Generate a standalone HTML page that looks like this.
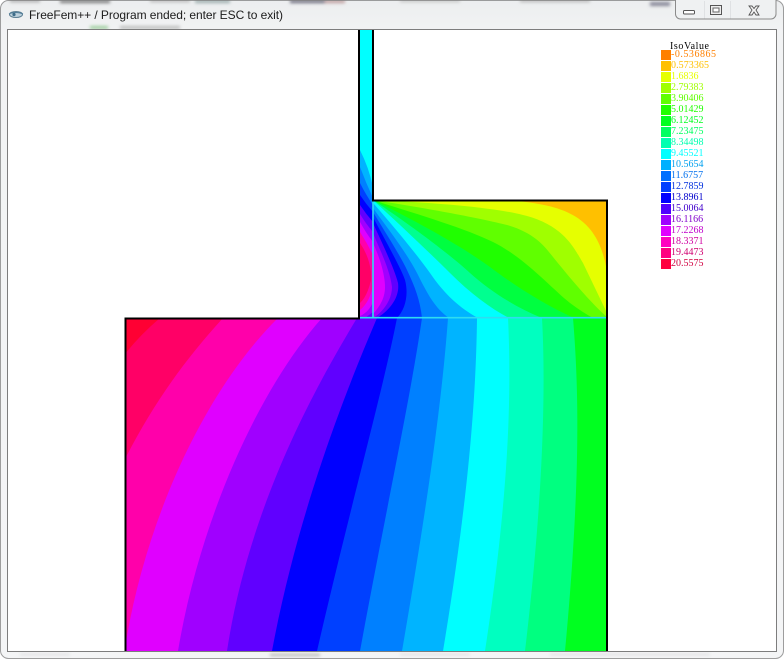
<!DOCTYPE html>
<html><head><meta charset="utf-8"><title>FreeFem++</title>
<style>html,body{margin:0;padding:0;background:#f2f3f4;width:784px;height:659px;overflow:hidden}svg{display:block}</style>
</head><body>
<svg xmlns="http://www.w3.org/2000/svg" width="784" height="659" viewBox="0 0 784 659">
<defs>
<filter id="b" x="-30%" y="-200%" width="160%" height="500%"><feGaussianBlur stdDeviation="1.6"/></filter>
<linearGradient id="t" x1="0" y1="0" x2="0" y2="1"><stop offset="0" stop-color="#eceeef"/><stop offset=".05" stop-color="#f2f3f4"/><stop offset="1" stop-color="#f4f5f6"/></linearGradient>
</defs>
<rect width="784" height="659" fill="#ffffff"/>
<rect x="0" y="0" width="784" height="659" rx="8" fill="url(#t)"/>
<g filter="url(#b)">
<rect x="10" y="0" width="30" height="2" fill="#999"/><rect x="60" y="0" width="50" height="3" fill="#777"/>
<rect x="150" y="0" width="40" height="2" fill="#aaa"/><rect x="195" y="0" width="35" height="3" fill="#9aa"/>
<rect x="290" y="0" width="50" height="3" fill="#667"/><rect x="325" y="0" width="20" height="3" fill="#b99"/>
<rect x="400" y="0" width="60" height="2" fill="#bbb"/><rect x="520" y="0" width="70" height="2" fill="#aaa"/>
<rect x="650" y="2" width="20" height="4" fill="#889"/>
<rect x="90" y="26" width="18" height="3" fill="#9c9"/><rect x="120" y="26" width="60" height="3" fill="#bbb"/>
<rect x="20" y="654" width="50" height="1" fill="#ccc"/><rect x="270" y="654" width="50" height="2" fill="#aaa"/>
<rect x="400" y="654" width="70" height="1" fill="#ccc"/><rect x="550" y="654" width="160" height="1" fill="#ccc"/>
</g>
<rect x="0.5" y="0.5" width="783" height="658" rx="8" fill="none" stroke="#777" stroke-opacity=".7"/>

<!-- window buttons -->
<path d="M675.5 0V14a5 5 0 0 0 5 5H771a5 5 0 0 0 5-5V0" fill="#eff1f2" stroke="#8b8b8b"/>
<path d="M704.5 1V18.5M730.5 1V18.5" stroke="#dfe1e3"/>
<rect x="683.5" y="10.5" width="11" height="3.5" rx="1" fill="#fff" stroke="#555"/>
<rect x="710.5" y="5.5" width="11" height="9" fill="#eee" stroke="#555"/>
<rect x="713" y="8" width="6" height="4" fill="#fff" stroke="#666"/>
<path d="M749 6H752L754 8.5L756 6H759L756 10L759 15H756L754 12L752 15H749L752 10Z" fill="#f4f4f4" stroke="#555" stroke-width=".9"/>

<!-- title -->
<ellipse cx="16" cy="14.5" rx="6.5" ry="3" fill="#bcd0dc" stroke="#5d7f93"/>
<path d="M9 14C12 12 19 12 23 14" stroke="#4f7c98" fill="none"/>
<circle cx="14" cy="14.5" r="1.6" fill="#3e6c88"/>
<text x="29" y="19" font-family="'Liberation Sans',sans-serif" font-size="12" fill="#1c1c1c" textLength="254" lengthAdjust="spacing">FreeFem++ / Program ended; enter ESC to exit)</text>

<!-- client area -->
<rect x="7.5" y="29.5" width="769" height="622" fill="#fff" stroke="#7d7d7d"/>

<!-- lower rectangle -->
<rect x="125" y="318" width="482" height="333" fill="#00ff20"/>
<g>
<path fill="#00ff80" d="M573 318C578 380 582 470 565 651H125V318Z"/>
<path fill="#00ffc0" d="M542 318C546 390 543 500 525 651H125V318Z"/>
<path fill="#00ffff" d="M508 318C512 400 508 500 485 651H125V318Z"/>
<path fill="#00b4ff" d="M477 318C476 400 468 500 443 651H125V318Z"/>
<path fill="#0080ff" d="M448 318C442 400 428 500 402 651H125V318Z"/>
<path fill="#0040ff" d="M422 318C410 400 388 500 360 651H125V318Z"/>
<path fill="#0000ff" d="M397 318C383 390 352 500 317 651H125V318Z"/>
<path fill="#6000ff" d="M377 318C355 370 300 500 272 651H125V318Z"/>
<path fill="#a000ff" d="M357 318C320 380 250 500 227 651H125V318Z"/>
<path fill="#e000ff" d="M322 318C258 390 200 520 178 651H125V318Z"/>
<path fill="#ff00aa" d="M278 318C205 390 145 520 125 648V318Z"/>
<path fill="#ff0066" d="M223 318C180 365 150 410 125 459V318Z"/>
<path fill="#ff0033" d="M160 318Q140 335 125 354V318Z"/>
</g>

<!-- upper-right rectangle -->
<rect x="373" y="200" width="234" height="118" fill="#ffc000"/>
<g>
<path fill="#e6ff00" d="M373 200H507C565 205 598 215 607 272V318H373Z"/>
<path fill="#a0ff00" d="M373 200C450 203 500 209 523 215C565 225 575 250 583 263Q595 288 607 313V318H373Z"/>
<path fill="#60ff00" d="M373 200C420 207 480 218 507 225C535 233 545 247 553 257C570 278 590 302 607 317V318H373Z"/>
<path fill="#20ff00" d="M373 200C410 212 465 228 493 242C525 258 550 287 570 303Q582 312 593 318H373Z"/>
<path fill="#00ff40" d="M373 200C410 218 460 245 490 267C515 286 545 305 574 318H373Z"/>
<path fill="#00ff90" d="M373 200C400 218 445 250 470 273C490 291 515 307 542 318H373Z"/>
<path fill="#00ffff" d="M373 200C395 220 430 253 450 273C470 293 490 308 509 318H373Z"/>
<path fill="#00b4ff" d="M373 203C390 222 415 252 430 273C445 295 460 308 478 318H373Z"/>
<path fill="#0080ff" d="M373 208C385 225 405 250 417 273C428 295 435 308 449 318H373Z"/>
<path fill="#0040ff" d="M373 212C385 232 400 255 407 270C415 287 420 300 422 318H373Z"/>
<path fill="#0000ff" d="M373 217C385 240 402 270 405 280C409 295 405 310 397 318H373Z"/>
<path fill="#6000ff" d="M373 223C382 243 395 270 398 283C400 297 390 310 377 318H373Z"/>
<path fill="#a000ff" d="M373 233C380 250 390 270 392 287C392 300 383 312 373 318Z"/>
<path fill="#e000ff" d="M373 243C380 258 385 275 385 287C385 298 380 306 373 314Z"/>
</g>

<!-- side column -->
<rect x="359" y="30" width="14" height="288" fill="#00ffff"/>
<g>
<path fill="#00b4ff" d="M360 150Q369 168 373 187V318H360Z"/>
<path fill="#0080ff" d="M360 167Q366 183 373 198V318H360Z"/>
<path fill="#0040ff" d="M360 183Q366 195 373 205V318H360Z"/>
<path fill="#0000ff" d="M360 195Q366 204 373 212V318H360Z"/>
<path fill="#6000ff" d="M360 205Q366 214 373 222V318H360Z"/>
<path fill="#a000ff" d="M360 214Q366 224 373 232V318H360Z"/>
<path fill="#e000ff" d="M360 222Q366 233 373 242V318H360Z"/>
<path fill="#ff00aa" d="M360 232Q367 243 373 255V318H360Z"/>
<path fill="#ff0066" d="M360 243Q369 256 371 272V318H360Z"/>
<path fill="#ff00aa" d="M360 303Q369 295 373 270V318H360Z"/>
<path fill="#e000ff" d="M360 310Q370 302 373 285V318H360Z"/>
<path fill="#a000ff" d="M360 316Q369 312 373 302V318H360Z"/>
<path fill="#6000ff" d="M365 318L373 312V318Z"/>
</g>

<!-- cyan mesh lines -->
<path d="M373 201V318M360 317.7H606" stroke="#2fdcf0" stroke-width="1.6" fill="none"/>

<!-- outline -->
<path d="M359 30V318.5H125.5V651M607 651V200.5H373V30" stroke="#000" stroke-width="2" fill="none"/>

<!-- legend -->
<text x="670" y="49" font-family="'Liberation Serif',serif" font-size="10" fill="#000" textLength="39">IsoValue</text>
<g font-family="'Liberation Serif',serif" font-size="10">
<rect x="661" y="50" width="10" height="10" fill="#ff8000"/><text x="671" y="57" fill="#ff8000" textLength="45">-0.536865</text>
<rect x="661" y="61" width="10" height="10" fill="#ffc000"/><text x="671" y="68" fill="#ffc000" textLength="38">0.573365</text>
<rect x="661" y="72" width="10" height="10" fill="#e6ff00"/><text x="671" y="79" fill="#e6ff00">1.6836</text>
<rect x="661" y="83" width="10" height="10" fill="#a0ff00"/><text x="671" y="90" fill="#a0ff00">2.79383</text>
<rect x="661" y="94" width="10" height="10" fill="#60ff00"/><text x="671" y="101" fill="#60ff00">3.90406</text>
<rect x="661" y="105" width="10" height="10" fill="#20ff00"/><text x="671" y="112" fill="#20ff00">5.01429</text>
<rect x="661" y="116" width="10" height="10" fill="#00ff20"/><text x="671" y="123" fill="#00ff20">6.12452</text>
<rect x="661" y="127" width="10" height="10" fill="#00ff60"/><text x="671" y="134" fill="#00ff60">7.23475</text>
<rect x="661" y="138" width="10" height="10" fill="#00ffb0"/><text x="671" y="145" fill="#00ffb0">8.34498</text>
<rect x="661" y="149" width="10" height="10" fill="#00ffff"/><text x="671" y="156" fill="#00ffff">9.45521</text>
<rect x="661" y="160" width="10" height="10" fill="#00b0ff"/><text x="671" y="167" fill="#00a0ee">10.5654</text>
<rect x="661" y="171" width="10" height="10" fill="#0070ff"/><text x="671" y="178" fill="#0070ee">11.6757</text>
<rect x="661" y="182" width="10" height="10" fill="#0040ff"/><text x="671" y="189" fill="#0030dd">12.7859</text>
<rect x="661" y="193" width="10" height="10" fill="#0000ff"/><text x="671" y="200" fill="#0000cc">13.8961</text>
<rect x="661" y="204" width="10" height="10" fill="#5000ff"/><text x="671" y="211" fill="#4000cc">15.0064</text>
<rect x="661" y="215" width="10" height="10" fill="#a000ff"/><text x="671" y="222" fill="#8000cc">16.1166</text>
<rect x="661" y="226" width="10" height="10" fill="#e000ff"/><text x="671" y="233" fill="#c000cc">17.2268</text>
<rect x="661" y="237" width="10" height="10" fill="#ff00c0"/><text x="671" y="244" fill="#d000a0">18.3371</text>
<rect x="661" y="248" width="10" height="10" fill="#ff0080"/><text x="671" y="255" fill="#d00070">19.4473</text>
<rect x="661" y="259" width="10" height="10" fill="#ff0040"/><text x="671" y="266" fill="#d00040">20.5575</text>
</g>
</svg>
</body></html>
